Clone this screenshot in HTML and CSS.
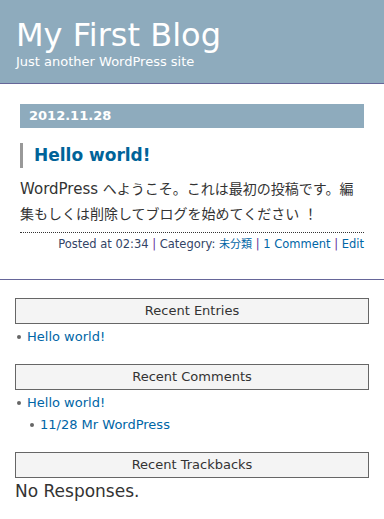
FILE: index.html
```html
<!DOCTYPE html>
<html lang="ja">
<head>
<meta charset="UTF-8">
<meta name="viewport" content="width=device-width, initial-scale=1.0">
<title>My First Blog</title>
<link rel="stylesheet" href="styles.css">
</head>
<body>

<div class="site-header">
  <h1 class="site-title">My First Blog</h1>
  <p class="site-desc">Just another WordPress site</p>
</div>

<div class="content">
  <div class="post">
    <h2 class="post-date">2012.11.28</h2>
    <h3 class="post-title"><a href="#">Hello world!</a></h3>
    <div class="entry">
      <p>WordPress <span class="ja">へようこそ。これは最初の投稿です。編集もしくは削除してブログを始めてください ！</span></p>
    </div>
    <p class="post-meta">Posted at 02:34 <span class="sep">|</span> Category: <a href="#" class="ja">未分類</a> <span class="sep">|</span> <a href="#">1 Comment</a> <span class="sep">|</span> <a href="#">Edit</a></p>
  </div>
</div>

<div class="sidebar">
  <div class="widget">
    <h4 class="widget-title">Recent Entries</h4>
    <ul class="widget-list">
      <li><a href="#">Hello world!</a></li>
    </ul>
  </div>
  <div class="widget">
    <h4 class="widget-title">Recent Comments</h4>
    <ul class="widget-list">
      <li><a href="#">Hello world!</a>
        <ul class="widget-list sub">
          <li><a href="#">11/28 Mr WordPress</a></li>
        </ul>
      </li>
    </ul>
  </div>
  <div class="widget">
    <h4 class="widget-title">Recent Trackbacks</h4>
    <p class="no-responses">No Responses.</p>
  </div>
</div>

</body>
</html>
```

FILE: styles.css
```css
body {
  margin: 0;
  font-family: "DejaVu Sans", "Noto Sans CJK JP", sans-serif;
  color: #333;
  background-color: #fff;
}
a {
  color: #0066a6;
  text-decoration: none;
}
.site-header {
  background-color: #8eabbd;
  border-bottom: 1px solid #666699;
  padding: 19px 16px 15px;
  color: #fff;
}
.site-title {
  margin: 0;
  font-size: 32px;
  line-height: 32px;
  font-weight: normal;
}
.site-desc {
  margin: 4px 0 0;
  font-size: 13px;
  line-height: 13px;
}
.content {
  padding: 20px 20px 25px;
  border-bottom: 1px solid #666699;
}
.post-date {
  margin: 0;
  background-color: #8eabbd;
  color: #fff;
  font-size: 13px;
  line-height: 24px;
  padding-left: 9px;
}
.post-title {
  margin: 15px 0 0;
  border-left: 3px solid #999;
  padding-left: 11px;
  font-size: 17px;
  line-height: 25px;
}
.post-title a {
  color: #006399;
}
.entry p {
  margin: 9px 0 0;
  font-size: 15px;
  line-height: 25px;
}
.entry .ja {
  font-size: 14px;
}
.post-meta {
  margin: 5px 0 0;
  border-top: 1px dotted #333;
  padding-top: 2px;
  text-align: right;
  font-size: 11.5px;
  line-height: 18px;
  color: #334466;
}
.post-meta .ja {
  font-size: 11px;
}
.post-meta .sep {
  color: #663399;
}
.sidebar {
  padding: 18px 15px 0;
}
.widget {
  margin-bottom: 17px;
}
.widget-title {
  margin: 0;
  background-color: #f4f4f4;
  border: 1px solid #666;
  text-align: center;
  font-size: 13px;
  line-height: 24px;
  font-weight: normal;
  color: #333;
}
.widget-list {
  list-style: none;
  margin: 0;
  padding: 2px 0 0;
  font-size: 13px;
  line-height: 21px;
}
.widget-list li {
  position: relative;
  padding-left: 12px;
}
.widget-list li::before {
  content: "";
  position: absolute;
  left: 2px;
  top: 9px;
  width: 4px;
  height: 4px;
  border-radius: 50%;
  background-color: #666;
}
.widget-list.sub {
  padding: 1px 0 0 1px;
}
.no-responses {
  margin: 0;
  font-size: 17px;
  line-height: 26px;
}
```
